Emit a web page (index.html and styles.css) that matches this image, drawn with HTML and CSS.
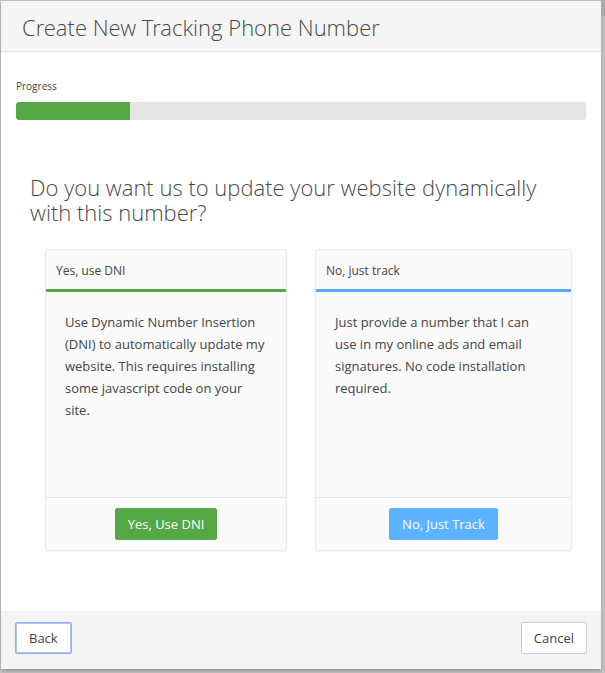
FILE: index.html
```html
<!DOCTYPE html>
<html>
<head>
<meta charset="utf-8">
<link rel="stylesheet" href="styles.css">
</head>
<body>
<div class="scroll-thumb"></div>
<div class="dialog">
  <div class="dialog-header">
    <h1 class="dialog-title">Create New Tracking Phone Number</h1>
  </div>
  <div class="dialog-body">
    <div class="progress-label">Progress</div>
    <div class="progress"><div class="progress-fill" style="width:20%"></div></div>
    <h2 class="question">Do you want us to update your website dynamically with this number?</h2>
    <div class="cards">
      <div class="card card-green">
        <div class="card-head">Yes, use DNI</div>
        <div class="card-body">Use Dynamic Number Insertion (DNI) to automatically update my website. This requires installing some javascript code on your site.</div>
        <div class="card-foot"><button class="btn btn-green">Yes, Use DNI</button></div>
      </div>
      <div class="card card-blue">
        <div class="card-head">No, just track</div>
        <div class="card-body">Just provide a number that I can use in my online ads and email signatures. No code installation required.</div>
        <div class="card-foot"><button class="btn btn-blue">No, Just Track</button></div>
      </div>
    </div>
  </div>
  <div class="dialog-footer">
    <button class="btn btn-default btn-focus">Back</button>
    <button class="btn btn-default btn-cancel">Cancel</button>
  </div>
</div>
</body>
</html>
```
FILE: styles.css
```css
html, body {
  margin: 0;
  padding: 0;
  height: 673px;
  overflow: hidden;
}
body {
  background: #c4c4c4;
  font-family: "Open Sans", "Liberation Sans", sans-serif;
  color: #333;
  position: relative;
}
.scroll-thumb {
  position: absolute;
  right: 0;
  top: 0;
  width: 4px;
  height: 16px;
  background: #a9a9a9;
}
.dialog {
  margin: 1px 0 0 1px;
  width: 600px;
  height: 668px;
  background: #fff;
  display: flex;
  flex-direction: column;
  box-shadow: 0 2px 4px rgba(0,0,0,0.25);
}
.dialog-header {
  height: 51px;
  background: #f5f5f5;
  border-bottom: 1px solid #e2e2e2;
  box-sizing: border-box;
  display: flex;
  align-items: center;
  padding-left: 21px;
}
.dialog-title {
  margin: 0;
  font-family: "Open Sans Light", "Open Sans", "Liberation Sans", sans-serif;
  font-size: 22px;
  font-weight: 300;
  color: #484848;
  line-height: 28px;
  padding-top: 2px;
}
.dialog-body {
  flex: 1;
  padding: 27px 15px 0 15px;
}
.progress-label {
  font-size: 10px;
  line-height: 14px;
  color: #444;
}
.progress {
  margin-top: 9px;
  height: 18px;
  background: #e5e5e5;
  border-radius: 3px;
  overflow: hidden;
}
.progress-fill {
  height: 100%;
  background: #55a944;
  border-radius: 3px 0 0 3px;
}
.question {
  margin: 55px 0 0 14px;
  font-family: "Open Sans Light", "Open Sans", "Liberation Sans", sans-serif;
  font-size: 22px;
  font-weight: 300;
  line-height: 25px;
  color: #484848;
  width: 530px;
}
.cards {
  display: grid;
  grid-template-columns: 242px 257px;
  column-gap: 28px;
  margin: 24px 0 0 29px;
}
.card {
  height: 302px;
  background: #fafafa;
  border: 1px solid #ebebeb;
  border-radius: 3px;
  box-sizing: border-box;
  box-shadow: 0 1px 2px rgba(0,0,0,0.06);
  display: flex;
  flex-direction: column;
}
.card-head {
  height: 42px;
  box-sizing: border-box;
  padding: 12px 10px 0 10px;
  font-size: 12px;
  line-height: 17px;
  color: #444;
  border-bottom: 3px solid #55a944;
}
.card-blue .card-head {
  border-bottom-color: #5aabf5;
}
.card-body {
  flex: 1;
  padding: 19px 20px 0 19px;
  font-size: 13px;
  line-height: 22px;
  color: #444;
}
.card-foot {
  border-top: 1px solid #e4e4e4;
  height: 53px;
  box-sizing: border-box;
  display: flex;
  justify-content: center;
  align-items: flex-start;
  padding-top: 10px;
}
.btn {
  font-family: "Open Sans", "Liberation Sans", sans-serif;
  font-size: 13px;
  height: 32px;
  line-height: 30px;
  padding: 0 12px;
  border-radius: 2px;
  border: 1px solid transparent;
  box-sizing: border-box;
  cursor: pointer;
}
.btn-green {
  background: #55a944;
  border-color: #55a944;
  color: #fff;
}
.btn-blue {
  background: #5cb3ff;
  border-color: #5cb3ff;
  color: #fff;
}
.dialog-footer {
  height: 58px;
  background: #f4f4f4;
  display: flex;
  justify-content: space-between;
  align-items: flex-start;
  padding: 11px 14px 0 14px;
  box-sizing: border-box;
}
.btn-default {
  background: #fff;
  border-color: #cccccc;
  color: #444;
  padding: 0 11px;
}
.btn-cancel {
  padding: 0 12px;
}
.btn-focus {
  border-color: #8fb2ee;
  box-shadow: 0 0 0 1px #a9c4f5 inset;
  padding: 0 13px;
}
```
